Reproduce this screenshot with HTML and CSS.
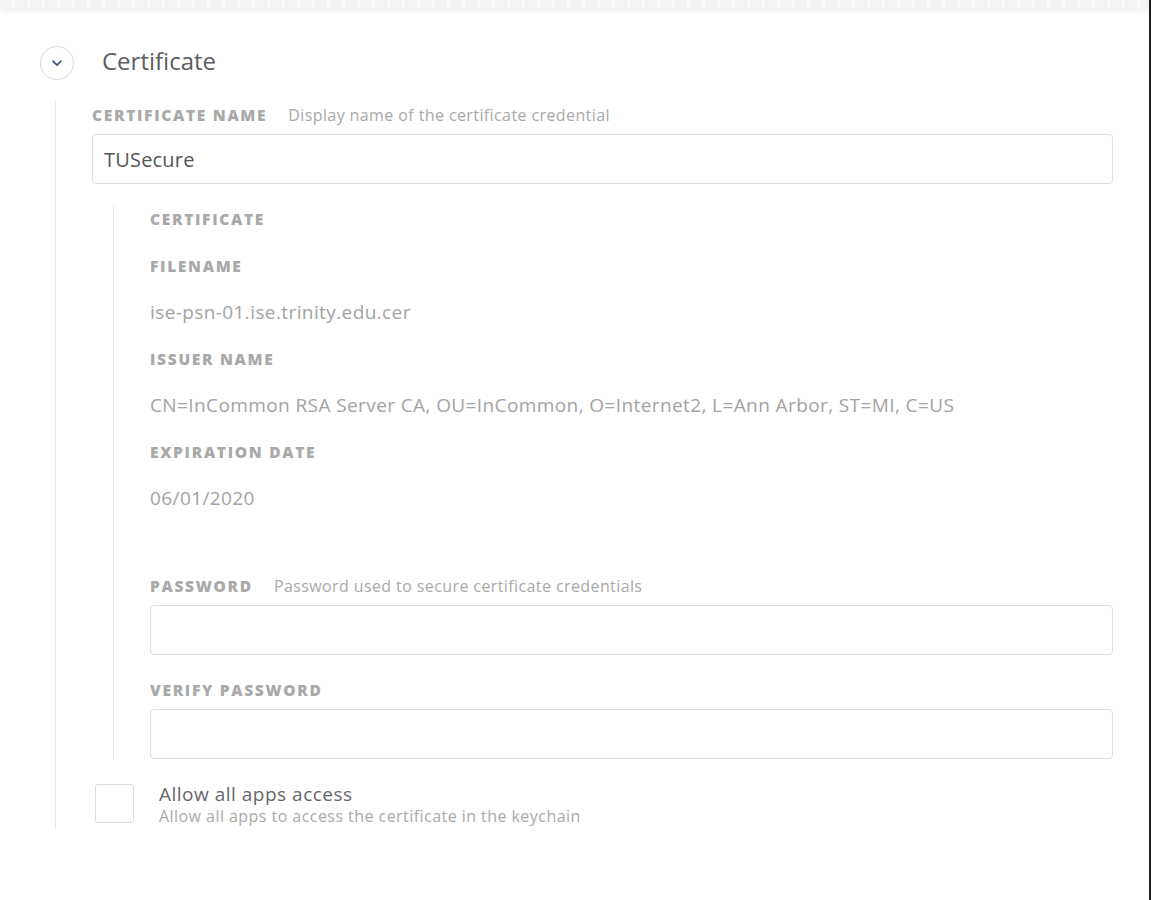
FILE: index.html
```html
<!DOCTYPE html>
<html lang="en">
<head>
  <meta charset="UTF-8" />
  <title>Certificate</title>
  <link rel="stylesheet" href="styles.css">
</head>
<body>
  <div class="page">
    <div class="toolbar-edge"></div>

    <div class="section">
      <div class="section-header">
        <button class="toggle" type="button" aria-label="Collapse">
          <svg width="14" height="14" viewBox="0 0 14 14"><path d="M3 5.2 L7 9.2 L11 5.2" fill="none" stroke="#44527a" stroke-width="1.7" stroke-linecap="round" stroke-linejoin="round"/></svg>
        </button>
        <h2>Certificate</h2>
      </div>

      <div class="section-body">
        <div class="label-row">
          <span class="label">Certificate Name</span>
          <span class="hint">Display name of the certificate credential</span>
        </div>
        <input class="text-input" type="text" value="TUSecure" />

        <div class="cert-group">
          <div class="label-row cert-title"><span class="label">Certificate</span></div>

          <div class="label-row"><span class="label">Filename</span></div>
          <div class="value">ise-psn-01.ise.trinity.edu.cer</div>

          <div class="label-row"><span class="label">Issuer Name</span></div>
          <div class="value">CN=InCommon RSA Server CA, OU=InCommon, O=Internet2, L=Ann Arbor, ST=MI, C=US</div>

          <div class="label-row"><span class="label">Expiration Date</span></div>
          <div class="value last">06/01/2020</div>

          <div class="label-row with-hint">
            <span class="label">Password</span>
            <span class="hint">Password used to secure certificate credentials</span>
          </div>
          <input class="text-input" type="password" />

          <div class="label-row spaced"><span class="label">Verify Password</span></div>
          <input class="text-input" type="password" />
        </div>

        <label class="check-row">
          <span class="checkbox"></span>
          <span class="check-text">
            <span class="check-title">Allow all apps access</span>
            <span class="check-desc">Allow all apps to access the certificate in the keychain</span>
          </span>
        </label>
      </div>
    </div>
  </div>
</body>
</html>
```

FILE: styles.css
```css
body {
  margin: 0;
  font-family: 'Open Sans', Lato, sans-serif;
  background-color: #fff;
  color: #666;
}
.page {
  min-height: 900px;
  border-right: 2px solid #1f1f1f;
  box-sizing: border-box;
}
.toolbar-edge {
  height: 8px;
  background: repeating-linear-gradient(90deg, #f3f3f3 0, #f3f3f3 12px, #fafafa 12px, #fafafa 15px);
  box-shadow: 0 2px 6px rgba(0, 0, 0, 0.07);
}
.section {
  padding: 0 36px 0 40px;
}
.section-header {
  display: flex;
  align-items: center;
  gap: 28px;
  margin-top: 38px;
}
.toggle {
  width: 34px;
  height: 34px;
  padding: 0;
  border-radius: 50%;
  border: 1px solid #d9d9e0;
  background: #fff;
  display: flex;
  align-items: center;
  justify-content: center;
  cursor: pointer;
}
.section-header h2 {
  margin: -4px 0 0;
  font-size: 24px;
  line-height: 30px;
  font-weight: normal;
  color: #5d5d63;
}
.section-body {
  margin: 20px 0 0 15px;
  padding: 5px 0 2px 36px;
  border-left: 1px solid #e8e8e8;
}
.label-row {
  display: flex;
  align-items: center;
  gap: 21px;
  height: 20px;
  margin-bottom: 9px;
}
.label {
  font-size: 15.5px;
  font-weight: 800;
  text-transform: uppercase;
  letter-spacing: 1.7px;
  color: #a9a9a9;
}
.hint {
  font-size: 16px;
  letter-spacing: 0.4px;
  color: #a9a9a9;
}
.text-input {
  display: block;
  width: 100%;
  height: 50px;
  box-sizing: border-box;
  border: 1px solid #dddde3;
  border-radius: 4px;
  padding: 0 11px;
  font-family: inherit;
  font-size: 20px;
  letter-spacing: 0.2px;
  color: #555;
  outline: none;
}
.cert-group {
  margin: 21px 0 0 21px;
  padding: 4px 0 0 36px;
  border-left: 1px solid #e8e8e8;
}
.cert-group .label-row {
  margin-bottom: 24px;
}
.cert-group .cert-title {
  margin-bottom: 27px;
}
.value {
  font-size: 19px;
  line-height: 24px;
  letter-spacing: 0.4px;
  color: #a3a3a3;
  margin-bottom: 25px;
}
.value.last {
  margin-bottom: 66px;
}
.cert-group .label-row.with-hint {
  margin-bottom: 9px;
}
.cert-group .label-row.spaced {
  margin-top: 25px;
  margin-bottom: 9px;
}
.check-row {
  display: flex;
  align-items: flex-start;
  gap: 25px;
  margin: 25px 0 0 3px;
}
.checkbox {
  width: 39px;
  height: 39px;
  box-sizing: border-box;
  border: 1px solid #dcdce2;
  border-radius: 3px;
}
.check-text {
  display: flex;
  flex-direction: column;
}
.check-title {
  font-size: 19px;
  line-height: 21px;
  letter-spacing: 0.5px;
  color: #66666b;
}
.check-desc {
  font-size: 16px;
  line-height: 22px;
  letter-spacing: 0.45px;
  color: #a9a9a9;
}
```
